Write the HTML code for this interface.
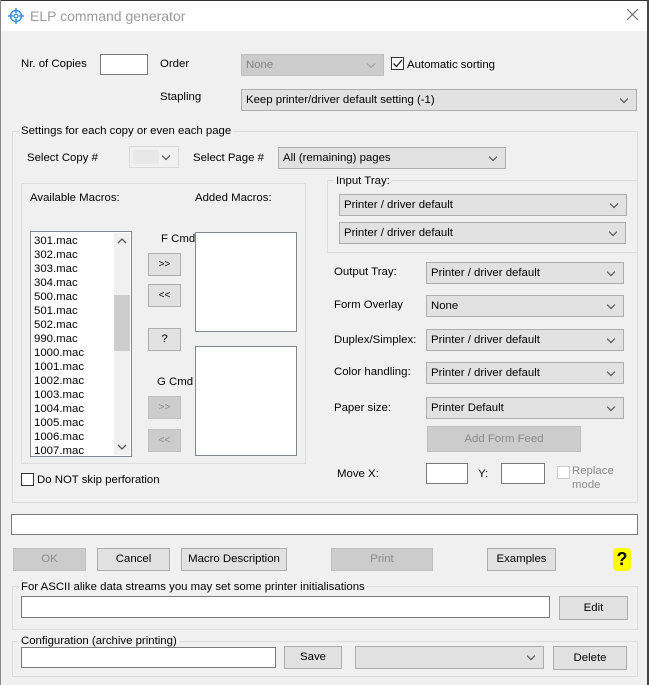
<!DOCTYPE html>
<html><head><meta charset="utf-8"><style>
*{box-sizing:border-box;margin:0;padding:0}
body{width:649px;height:685px;position:relative;overflow:hidden;background:#f0f0f0;font-family:"Liberation Sans",sans-serif;font-size:11.4px;color:#000}
.a{position:absolute}
.t{position:absolute;white-space:nowrap;line-height:14px}
.in{position:absolute;background:#fff;border:1px solid #7a7a7a}
.cb{position:absolute;background:#e1e1e1;border:1px solid #adadad;padding-left:4px;line-height:21px;white-space:nowrap}
.cb::after{content:"";position:absolute;right:9px;top:6px;width:5px;height:5px;border-right:1px solid #444;border-bottom:1px solid #444;transform:rotate(45deg)}
.dis{background:#cccccc;border-color:#bfbfbf;color:#838383}
.dis::after{border-color:#a0a0a0}
.bt{position:absolute;background:#e1e1e1;border:1px solid #adadad;text-align:center;white-space:nowrap}
.bd{background:#cccccc;border-color:#bfbfbf;color:#8a8a8a}
.g{position:absolute;border:1px solid #dcdcdc}
.gl{position:absolute;background:#f0f0f0;padding:0 2px;white-space:nowrap;line-height:14px}
.chk{position:absolute;width:13px;height:13px;border:1px solid #333;background:#fff}
</style></head><body>
<div class="a" style="left:0;top:0;width:649px;height:31px;background:#fff;border-top:1px solid #333"></div>
<div class="a" style="left:647px;top:0;width:2px;height:685px;background:#444"></div>
<div class="a" style="left:0;top:0;width:1px;height:685px;background:#888"></div>
<svg class="a" style="left:8px;top:8px" width="16" height="16" viewBox="0 0 16 16"><circle cx="8" cy="8" r="5.5" fill="none" stroke="#3a8fd8" stroke-width="1.5"/><circle cx="8" cy="8" r="2" fill="none" stroke="#3a8fd8" stroke-width="1.3"/><path d="M8 0v5M8 11v5M0 8h5M11 8h5" stroke="#3a8fd8" stroke-width="1.5"/></svg>
<div class="t" style="left:30px;top:8px;font-size:14px;line-height:16px;color:#9a9a9a">ELP command generator</div>
<svg class="a" style="left:627px;top:9px" width="11" height="11"><path d="M0 0L11 11M11 0L0 11" stroke="#777" stroke-width="1.2"/></svg>

<div class="t" style="left:21px;top:57px">Nr. of Copies</div>
<div class="in" style="left:100px;top:54px;width:48px;height:21px"></div>
<div class="t" style="left:160px;top:57px">Order</div>
<div class="cb dis" style="left:241px;top:54px;width:143px;height:22px">None</div>
<div class="chk" style="left:391px;top:57px"></div>
<svg class="a" style="left:392px;top:58px" width="11" height="11"><path d="M1.5 5.5L4.5 8.5L10 2" fill="none" stroke="#222" stroke-width="1.3"/></svg>
<div class="t" style="left:407px;top:58px">Automatic sorting</div>
<div class="t" style="left:160px;top:90px">Stapling</div>
<div class="cb" style="left:241px;top:89px;width:396px;height:22px">Keep printer/driver default setting (-1)</div>

<div class="g" style="left:12px;top:131px;width:626px;height:372px"></div>
<div class="gl" style="left:19px;top:124px">Settings for each copy or even each page</div>
<div class="t" style="left:27px;top:151px">Select Copy #</div>
<div class="cb" style="left:129px;top:146px;width:50px;height:22px;background:#f0f0f0;border-color:#d9d9d9"><span class="a" style="left:3px;top:3px;width:26px;height:14px;background:#e8e8e8"></span></div>
<div class="t" style="left:193px;top:151px">Select Page #</div>
<div class="cb" style="left:278px;top:147px;width:228px;height:22px">All (remaining) pages</div>

<div class="g" style="left:21px;top:183px;width:285px;height:281px"></div>
<div class="t" style="left:30px;top:191px">Available Macros:</div>
<div class="t" style="left:195px;top:191px">Added Macros:</div>
<div class="in" style="left:30px;top:231px;width:102px;height:226px;border-color:#828790;overflow:hidden">
<div class="a" style="left:3px;top:2px;line-height:14px">301.mac<br>302.mac<br>303.mac<br>304.mac<br>500.mac<br>501.mac<br>502.mac<br>990.mac<br>1000.mac<br>1001.mac<br>1002.mac<br>1003.mac<br>1004.mac<br>1005.mac<br>1006.mac<br>1007.mac</div>
<div class="a" style="left:83px;top:1px;width:16px;height:222px;background:#f0f0f0"></div>
<div class="a" style="left:83px;top:63px;width:16px;height:56px;background:#cdcdcd"></div>
<svg class="a" style="left:86px;top:6px" width="10" height="6"><path d="M1 5L5 1L9 5" fill="none" stroke="#555" stroke-width="1.3"/></svg>
<svg class="a" style="left:86px;top:212px" width="10" height="6"><path d="M1 1L5 5L9 1" fill="none" stroke="#555" stroke-width="1.3"/></svg>
</div>
<div class="t" style="left:161px;top:232px">F Cmd</div>
<div class="bt" style="left:148px;top:253px;width:33px;height:23px;line-height:21px;font-size:10px">&gt;&gt;</div>
<div class="bt" style="left:148px;top:284px;width:33px;height:23px;line-height:21px;font-size:10px">&lt;&lt;</div>
<div class="bt" style="left:148px;top:328px;width:33px;height:23px;line-height:21px">?</div>
<div class="t" style="left:157px;top:375px">G Cmd</div>
<div class="bt bd" style="left:148px;top:396px;width:33px;height:23px;line-height:21px;font-size:10px">&gt;&gt;</div>
<div class="bt bd" style="left:148px;top:429px;width:33px;height:23px;line-height:21px;font-size:10px">&lt;&lt;</div>
<div class="in" style="left:195px;top:232px;width:102px;height:100px;border-color:#828790"></div>
<div class="in" style="left:195px;top:346px;width:102px;height:110px;border-color:#828790"></div>
<div class="chk" style="left:21px;top:473px"></div>
<div class="t" style="left:37px;top:473px">Do NOT skip perforation</div>

<div class="g" style="left:327px;top:180px;width:311px;height:73px"></div>
<div class="gl" style="left:334px;top:174px">Input Tray:</div>
<div class="cb" style="left:339px;top:194px;width:288px;height:22px">Printer / driver default</div>
<div class="cb" style="left:339px;top:222px;width:287px;height:22px">Printer / driver default</div>
<div class="t" style="left:334px;top:265px">Output Tray:</div>
<div class="cb" style="left:426px;top:262px;width:198px;height:22px">Printer / driver default</div>
<div class="t" style="left:334px;top:298px">Form Overlay</div>
<div class="cb" style="left:426px;top:295px;width:198px;height:22px">None</div>
<div class="t" style="left:334px;top:333px">Duplex/Simplex:</div>
<div class="cb" style="left:426px;top:329px;width:198px;height:22px">Printer / driver default</div>
<div class="t" style="left:334px;top:365px">Color handling:</div>
<div class="cb" style="left:426px;top:362px;width:198px;height:22px">Printer / driver default</div>
<div class="t" style="left:334px;top:401px">Paper size:</div>
<div class="cb" style="left:426px;top:397px;width:198px;height:22px">Printer Default</div>
<div class="bt bd" style="left:427px;top:426px;width:154px;height:26px;line-height:24px">Add Form Feed</div>
<div class="t" style="left:337px;top:467px">Move X:</div>
<div class="in" style="left:426px;top:463px;width:42px;height:21px"></div>
<div class="t" style="left:478px;top:467px">Y:</div>
<div class="in" style="left:501px;top:463px;width:44px;height:21px"></div>
<div class="chk" style="left:557px;top:466px;border-color:#ccc"></div>
<div class="t" style="left:572px;top:464px;color:#8a8a8a">Replace</div>
<div class="t" style="left:572px;top:478px;color:#8a8a8a">mode</div>

<div class="in" style="left:11px;top:514px;width:627px;height:21px"></div>
<div class="bt bd" style="left:13px;top:548px;width:73px;height:23px;line-height:21px">OK</div>
<div class="bt" style="left:97px;top:548px;width:73px;height:23px;line-height:21px">Cancel</div>
<div class="bt" style="left:181px;top:548px;width:106px;height:23px;line-height:21px">Macro Description</div>
<div class="bt bd" style="left:331px;top:548px;width:102px;height:23px;line-height:21px">Print</div>
<div class="bt" style="left:487px;top:548px;width:69px;height:23px;line-height:21px">Examples</div>
<div class="a" style="left:613px;top:548px;width:18px;height:23px;background:#ffff00;border-radius:4px;text-align:center;font-weight:bold;font-size:18px;line-height:23px">?</div>

<div class="g" style="left:12px;top:586px;width:626px;height:44px"></div>
<div class="gl" style="left:19px;top:580px">For ASCII alike data streams you may set some printer initialisations</div>
<div class="in" style="left:21px;top:596px;width:529px;height:22px"></div>
<div class="bt" style="left:559px;top:596px;width:69px;height:24px;line-height:22px">Edit</div>
<div class="g" style="left:12px;top:641px;width:626px;height:36px"></div>
<div class="gl" style="left:19px;top:634px">Configuration (archive printing)</div>
<div class="in" style="left:21px;top:647px;width:255px;height:21px"></div>
<div class="bt" style="left:284px;top:646px;width:58px;height:23px;line-height:21px">Save</div>
<div class="cb" style="left:355px;top:646px;width:189px;height:23px"></div>
<div class="bt" style="left:553px;top:646px;width:74px;height:24px;line-height:22px">Delete</div>
</body></html>
